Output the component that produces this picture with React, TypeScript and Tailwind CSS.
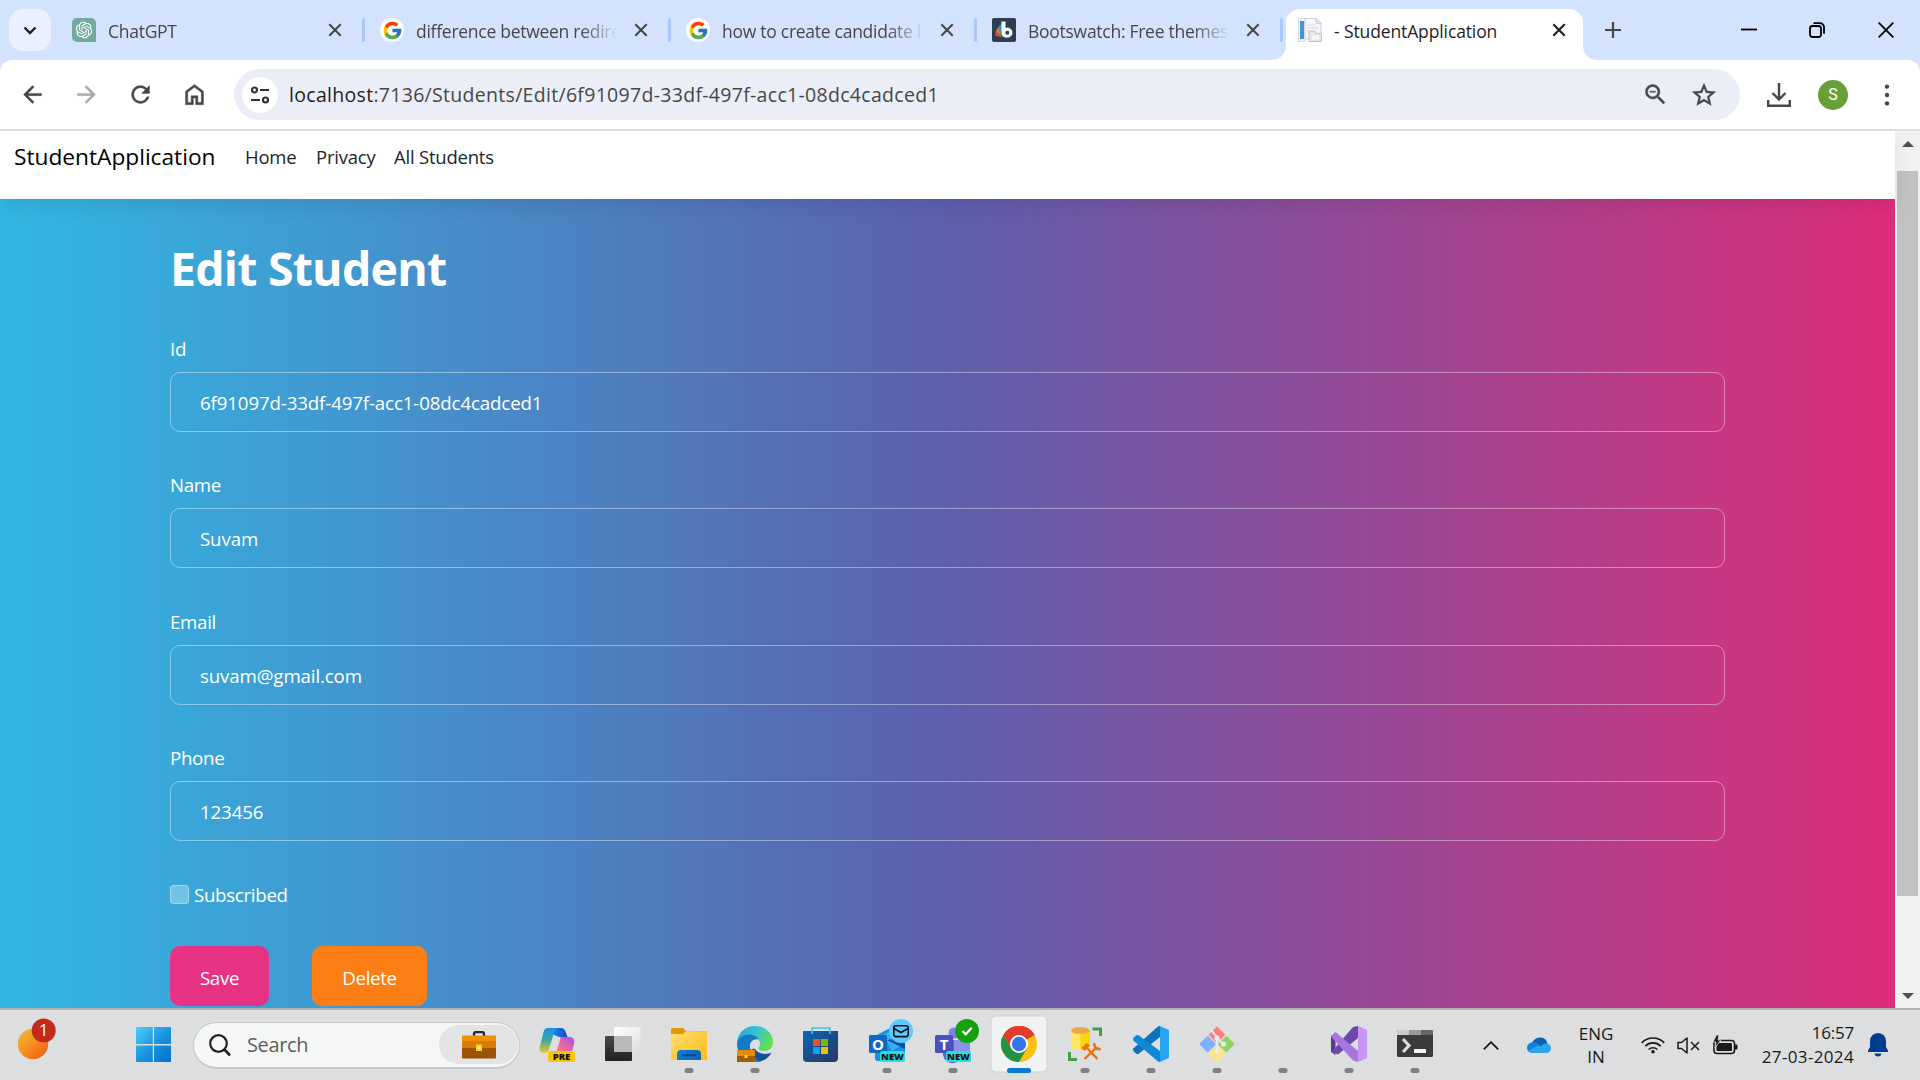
import type { ReactNode } from 'react';
import { FcGoogle } from 'react-icons/fc';
import { RiOpenaiFill } from 'react-icons/ri';

function CloseX({ color = '#474747' }: { color?: string }) {
  return (
    <svg viewBox="0 0 14 14" className="h-3.5 w-3.5 shrink-0" fill="none" stroke={color} strokeWidth="2.1">
      <path d="M1.3 1.3 12.7 12.7M12.7 1.3 1.3 12.7" />
    </svg>
  );
}

function GoogleIcon() {
  return (
    <span className="flex h-6 w-6 items-center justify-center rounded-full bg-white">
      <FcGoogle size={21} />
    </span>
  );
}

function GptIcon() {
  return (
    <span className="flex h-6 w-6 items-center justify-center rounded-[5px] rounded-br-none bg-[#74aa9c]">
      <RiOpenaiFill size={20} color="#fff" />
    </span>
  );
}

function BootswatchIcon() {
  return (
    <svg viewBox="0 0 24 24" className="h-6 w-6">
      <rect width="24" height="24" rx="2" fill="#2c3e50" />
      <path d="M12 4 8.5 6.5 10.5 19Z" fill="#1abc9c" />
      <path d="M8.5 6.5 6 9.5 9.8 19Z" fill="#3498db" />
      <path d="M6 9.5 3.8 13 9.8 19Z" fill="#e67e22" />
      <path d="M3.8 13 3 17.5 9.8 19.5Z" fill="#e74c3c" />
      <path d="M9.500 3.500h4V10a5 5 0 1 1 2 9.600c-4 .4-6-1.600-6-5Z" fill="#fff" />
      <circle cx="15.300" cy="14.700" r="2" fill="#2c3e50" />
    </svg>
  );
}

function PageIcon() {
  return (
    <svg viewBox="0 0 24 24" className="h-6 w-6">
      <rect x=".5" y=".5" width="6.500" height="23" fill="#f2f5f8" stroke="#c6d3de" strokeWidth=".7" />
      <rect x="2" y="3" width="4" height="18" fill="#3f96d2" />
      <path d="M7 .5h11.500l4.500 4.500v16H7Z" fill="#f6f7f9" stroke="#c3c8ce" strokeWidth=".8" />
      <path d="M18 .5v5h5" fill="#e2e6ea" stroke="#c3c8ce" strokeWidth=".7" />
      <path d="M9 7h8M9 10h12M9 13h3" stroke="#d5dae0" strokeWidth="1" />
      <path d="M11 13h6l1 2.500h5.500v8H11Z" fill="#e4e7ec" stroke="#b9c0c9" strokeWidth=".9" />
      <rect x="14" y="17.500" width="7" height="4" fill="#f7f8fa" />
    </svg>
  );
}

function Tab({ icon, label, first = false }: { icon: ReactNode; label: string; first?: boolean }) {
  return (
    <div className="flex h-[42px] shrink-0 items-center pl-2.5">
      {icon}
      <div
        className={
          'ml-3 overflow-hidden pt-0.5 text-[17.5px] tracking-[-0.27px] whitespace-nowrap text-[#474747] [mask-image:linear-gradient(to_right,black_165px,transparent_202px)] ' +
          (first ? 'w-[202px]' : 'w-[200px]')
        }
      >
        {label}
      </div>
      <div className="ml-[18px] flex w-[34px] items-center">
        <CloseX />
      </div>
      <div className="mr-[5px] h-6 w-[3px] rounded-full bg-[#a8c7fa]" />
    </div>
  );
}

function TabStrip() {
  return (
    <div className="flex h-[60px] shrink-0 items-start bg-[#d3e3fd] pt-[9px]">
      <div className="mr-[11px] ml-[9px] flex h-[42px] w-[42px] items-center justify-center rounded-[14px] bg-[#e9f1ff]">
        <svg viewBox="0 0 14 9" className="h-[9px] w-3.5" fill="none" stroke="#1f1f1f" strokeWidth="2.400">
          <path d="M1.500 1.500 7 7 12.500 1.500" />
        </svg>
      </div>
      <Tab first icon={<GptIcon />} label="ChatGPT" />
      <Tab icon={<GoogleIcon />} label="difference between redire" />
      <Tab icon={<GoogleIcon />} label="how to create candidate l" />
      <Tab icon={<BootswatchIcon />} label="Bootswatch: Free themes" />
      <div className="relative -ml-0.5 flex h-[51px] w-[297px] shrink-0 items-start rounded-t-[14px] bg-white pl-3">
        <svg viewBox="0 0 14 14" className="absolute bottom-0 -left-3.5 h-3.5 w-3.5">
          <path d="M14 0v14H0A14 14 0 0 0 14 0Z" fill="#fff" />
        </svg>
        <svg viewBox="0 0 14 14" className="absolute -right-3.5 bottom-0 h-3.5 w-3.5">
          <path d="M0 0v14H14A14 14 0 0 1 0 0Z" fill="#fff" />
        </svg>
        <div className="flex h-[42px] items-center">
          <PageIcon />
          <div className="ml-3 w-[218px] pt-0.5 text-[17.5px] tracking-[-0.12px] whitespace-nowrap text-[#1f1f1f]">
            - StudentApplication
          </div>
          <CloseX color="#1f1f1f" />
        </div>
      </div>
      <div className="ml-[21px] flex h-[42px] grow items-center">
        <svg viewBox="0 0 18 18" className="h-[18px] w-[18px]" stroke="#474747" strokeWidth="2.200">
          <path d="M9 1v16M1 9h16" />
        </svg>
        <svg viewBox="0 0 16 16" className="ml-[119px] h-4 w-4" stroke="#000" strokeWidth="1.800">
          <path d="M0 7.500h16" />
        </svg>
        <svg viewBox="0 0 16 16" className="ml-[52px] h-4 w-4" fill="none" stroke="#000" strokeWidth="1.800">
          <rect x="1" y="4" width="11" height="11" rx="2.500" />
          <path d="M4.500 1.200H11a4 4 0 0 1 4 4v6.500" />
        </svg>
        <svg viewBox="0 0 16 16" className="ml-[53px] h-4 w-4" fill="none" stroke="#000" strokeWidth="1.800">
          <path d="M.7.7 15.300 15.300M15.300.7.7 15.300" />
        </svg>
      </div>
    </div>
  );
}

function ToolIcon({ d, color = '#474747', size = 27 }: { d: string; color?: string; size?: number }) {
  return (
    <svg
      viewBox="0 0 24 24"
      width={size}
      height={size}
      fill={color}
      stroke={color}
      strokeWidth=".35"
      className="shrink-0"
    >
      <path d={d} />
    </svg>
  );
}

function Toolbar() {
  return (
    <div className="h-[71px] shrink-0 bg-[#d3e3fd]">
      <div className="flex h-full items-center rounded-t-[12px] border-b-2 border-[#dedede] bg-white">
        <div className="ml-[19px] flex w-[215px] gap-[27px]">
          <ToolIcon d="M20 11H7.830l5.590-5.590L12 4l-8 8 8 8 1.410-1.410L7.830 13H20v-2z" />
          <ToolIcon color="#a9a9a9" d="M12 4l-1.410 1.410L16.170 11H4v2h12.170l-5.580 5.590L12 20l8-8z" />
          <ToolIcon d="M17.650 6.350A7.958 7.958 0 0 0 12 4a8 8 0 1 0 7.730 10h-2.080A6 6 0 1 1 12 6c1.660 0 3.140.69 4.220 1.780L13 11h7V4l-2.350 2.350z" />
          <ToolIcon d="M6 19h3v-6h6v6h3v-9l-6-4.500L6 10v9zm-2 2V9l8-6 8 6v12h-7v-6h-2v6H4z" />
        </div>
        <div className="flex h-[51px] w-[1506px] items-center rounded-full bg-[#ebeef7] pl-2">
          <div className="flex h-9 w-9 items-center justify-center rounded-full bg-white">
            <svg viewBox="0 0 20 18" className="h-[18px] w-5" fill="none" stroke="#333" strokeWidth="2.200">
              <circle cx="4.500" cy="4" r="2.500" />
              <path d="M10 4h9M1 14h9" />
              <circle cx="15.500" cy="14" r="2.500" />
            </svg>
          </div>
          <div className="ml-[11px] grow text-[19.500px] tracking-[0.300px] whitespace-nowrap text-[#474747]">
            <span className="text-[#1f1f1f]">localhost</span>:7136/Students/Edit/6f91097d-33df-497f-acc1-08dc4cadced1
          </div>
          <div className="mr-[22px] flex items-center gap-[21px]">
            <ToolIcon d="M15.500 14h-.79l-.28-.27A6.471 6.471 0 0 0 16 9.500 6.500 6.500 0 1 0 9.500 16c1.610 0 3.090-.59 4.230-1.570l.27.28v.79l5 4.990L20.490 19l-4.990-5zm-6 0C7.010 14 5 11.990 5 9.500S7.010 5 9.500 5 14 7.010 14 9.500 11.990 14 9.500 14zM7 9h5v1H7z" />
            <ToolIcon
              size={28}
              d="M22 9.240l-7.190-.62L12 2 9.190 8.630 2 9.240l5.460 4.730L5.820 21 12 17.270 18.180 21l-1.630-7.030L22 9.240zM12 15.400l-3.760 2.270 1-4.280-3.320-2.880 4.380-.38L12 6.100l1.710 4.040 4.380.38-3.320 2.880 1 4.280L12 15.400z"
            />
          </div>
        </div>
        <svg viewBox="0 0 24 24" className="ml-[27px] h-6 w-6" fill="none" stroke="#474747" strokeWidth="2.400">
          <path d="M12 0v16M5.500 10 12 16.500 18.500 10M1.200 17v5.800h21.600V17" />
        </svg>
        <div className="ml-[27px] flex h-[30px] w-[30px] items-center justify-center rounded-full bg-[#689f38] font-['Roboto'] text-base text-white">
          S
        </div>
        <svg viewBox="0 0 6 22" className="ml-9 h-[22px] w-1.5" fill="#474747">
          <circle cx="3" cy="2.600" r="2.200" />
          <circle cx="3" cy="11" r="2.200" />
          <circle cx="3" cy="19.400" r="2.200" />
        </svg>
      </div>
    </div>
  );
}

function Field({ label, value }: { label: string; value: string }) {
  return (
    <div className="mb-[28.400px]">
      <div className="h-[48px] pt-[13px] leading-[24px] tracking-[-0.300px]">{label}</div>
      <div className="flex h-[60px] items-center rounded-[10px] border border-white/40 pt-0.5 pl-[29px]">{value}</div>
    </div>
  );
}

function Page() {
  return (
    <div className="flex h-[877px] shrink-0 overflow-hidden">
      <div className="flex w-[1895px] flex-col">
        <div className="relative flex h-[68px] shrink-0 bg-white pl-3.5 text-[18.500px] leading-[52px] tracking-[-0.220px] text-[#212529] shadow-[0_8px_16px_rgba(0,0,0,0.080)]">
          <span className="w-[231px] text-[22.700px] tracking-normal text-black">StudentApplication</span>
          <span className="w-[71px]">Home</span>
          <span className="w-[78px]">Privacy</span>
          <span>All Students</span>
        </div>
        <div className="grow bg-[linear-gradient(90deg,#31b8e3,#5d5fae_50%,#de2d79)] px-[170px] text-[18.700px] tracking-[-0.130px] text-white">
          <h1 className="h-[125px] pt-10 text-[46.500px] leading-[58px] font-bold tracking-[-0.800px]">Edit Student</h1>
          <Field label="Id" value="6f91097d-33df-497f-acc1-08dc4cadced1" />
          <Field label="Name" value="Suvam" />
          <Field label="Email" value="suvam@gmail.com" />
          <Field label="Phone" value="123456" />
          <div className="mt-[43px] flex h-[20px] items-center">
            <div className="h-[19px] w-[19px] rounded-[4px] border border-white/30 bg-white/30" />
            <span className="ml-[5px] pt-0.5 tracking-[-0.300px]">Subscribed</span>
          </div>
          <div className="mt-[42px] flex gap-[43px] tracking-[-0.350px]">
            <div className="flex h-[60px] w-[99px] items-center justify-center rounded-[10px] bg-[#e83283] pt-1">Save</div>
            <div className="flex h-[60px] w-[115px] items-center justify-center rounded-[10px] bg-[#fd7e14] pt-1">
              Delete
            </div>
          </div>
        </div>
      </div>
      <div className="flex w-[25px] flex-col items-center bg-[#f1f1f1]">
        <svg viewBox="0 0 12 6" className="mt-2.5 h-1.5 w-3" fill="#505050">
          <path d="M6 0 12 6H0Z" />
        </svg>
        <div className="mt-6 h-[725px] w-[21px] bg-[#c1c1c1]" />
        <svg viewBox="0 0 12 6" className="mt-auto mb-[9px] h-1.5 w-3" fill="#505050">
          <path d="M0 0H12L6 6Z" />
        </svg>
      </div>
    </div>
  );
}

function Slot({ children, open = false }: { children?: ReactNode; open?: boolean }) {
  return (
    <svg viewBox="0 0 66 70" className="h-[70px] w-[66px] shrink-0">
      {children}
      {open && <rect x="28.500" y="58" width="9" height="5" rx="2.500" fill="#7d7f80" />}
    </svg>
  );
}

function Label({ text, fill, x }: { text: string; fill: string; x: number }) {
  return (
    <>
      <rect x={x} y="41" width={51 - x} height="11" rx="2.500" fill={fill} />
      <text
        x={(x + 51) / 2}
        y="50"
        textAnchor="middle"
        fontSize="9.500"
        fontWeight="800"
        fontFamily="Open Sans"
        fill="#111"
      >
        {text}
      </text>
    </>
  );
}

function Copilot() {
  return (
    <Slot>
      <defs>
        <linearGradient id="cpA" x1="0" y1="0" x2="0" y2="1">
          <stop offset="0" stopColor="#1c8fe8" />
          <stop offset=".5" stopColor="#3fa9a0" />
          <stop offset="1" stopColor="#f2c81b" />
        </linearGradient>
        <linearGradient id="cpB" x1="1" y1="0" x2="0" y2="1">
          <stop offset="0" stopColor="#a04df0" />
          <stop offset=".5" stopColor="#ee6a9c" />
          <stop offset="1" stopColor="#f99a5b" />
        </linearGradient>
        <linearGradient id="cpC" x1="0" y1="0" x2="1" y2="0">
          <stop offset="0" stopColor="#1a9bea" />
          <stop offset="1" stopColor="#1846c9" />
        </linearGradient>
      </defs>
      <path d="M25 18h12c3 0 4 2 5 5l1.500 4H35L28 24Z" fill="url(#cpC)" />
      <path d="M36 27h9.500c4 0 5.500 3 4.500 7l-2 7c-1 3-3 5-6 5H28c3 0 4-3 5-6l3-10c.5-2 .5-3 0-3Z" fill="url(#cpB)" />
      <path d="M24 18h11c-3 0-4 2-5 5l-5 16c-1 3-2 4-5 4-4 0-5-3-4-7l3-12c1-4 2-6 5-6Z" fill="url(#cpA)" />
      <Label text="PRE" fill="#fcc503" x={24} />
    </Slot>
  );
}

function TaskView() {
  return (
    <Slot>
      <defs>
        <linearGradient id="tvA" x1="0" y1="0" x2="0" y2="1">
          <stop offset="0" stopColor="#484848" />
          <stop offset="1" stopColor="#222" />
        </linearGradient>
        <linearGradient id="tvB" x1="0" y1="0" x2="1" y2="1">
          <stop offset="0" stopColor="#fff" />
          <stop offset="1" stopColor="#dedede" />
        </linearGradient>
      </defs>
      <rect x="15" y="26" width="27" height="25" rx="1" fill="url(#tvA)" />
      <rect x="24" y="17" width="26.500" height="25" rx="1" fill="url(#tvB)" />
      <rect x="24" y="26" width="18" height="16" fill="#b9b9b9" />
    </Slot>
  );
}

function Folder() {
  return (
    <Slot open>
      <defs>
        <linearGradient id="foA" x1="0" y1="0" x2="1" y2="1">
          <stop offset="0" stopColor="#ffdc77" />
          <stop offset="1" stopColor="#fdbc12" />
        </linearGradient>
        <linearGradient id="foB" x1="0" y1="0" x2="1" y2="0">
          <stop offset="0" stopColor="#0f7cd6" />
          <stop offset="1" stopColor="#1464b4" />
        </linearGradient>
      </defs>
      <path d="M15 19.500Q15 18 16.500 18H27l3 3h20q1 0 1 1v8H15Z" fill="#dd9a06" />
      <path d="M15 24h12l3-2.800h20q1 0 1 1V50H15Z" fill="url(#foA)" />
      <path d="M21 50v-6q0-4 4-4h16q4 0 4 4v6Z" fill="url(#foB)" />
      <rect x="25.500" y="44.300" width="15" height="2" rx="1" fill="#0b4a8c" />
    </Slot>
  );
}

function Edge() {
  return (
    <Slot open>
      <defs>
        <linearGradient id="edA" x1="0" y1="0" x2="1" y2=".5">
          <stop offset="0" stopColor="#1e9fe0" />
          <stop offset=".5" stopColor="#35c3d3" />
          <stop offset="1" stopColor="#62df56" />
        </linearGradient>
        <linearGradient id="edB" x1="0" y1="0" x2="0" y2="1">
          <stop offset="0" stopColor="#1b74c4" />
          <stop offset="1" stopColor="#0b84dd" />
        </linearGradient>
      </defs>
      <path d="M34 52c7 0 13-4 15.500-9.500-6 3-14 1-17-4l-6 2c0 6 3 11 7.500 11.500Z" fill="#12519c" />
      <path d="M15 33C15.500 23 23 16 33 16c11 0 18 8 18 16 0 6-4 9-9 9-3 0-5.500-1-5.500-2.500 0-1 1.500-1.500 1.500-4.500 0-5-5-9-11-9-5 0-9 3-12 8Z" fill="url(#edA)" />
      <path d="M15 34c1-6 6-9.500 12-9.500 4 0 8 1.500 10 5-6-1.500-10 3-9 8 1 6 5 10 9 14.200C24 53.500 15 44 15 34Z" fill="url(#edB)" />
      <rect x="15" y="40" width="18" height="12" fill="#e88a05" />
      <rect x="15" y="46" width="18" height="6" fill="#a35a04" />
      <rect x="22.500" y="45" width="3" height="3" fill="#ffd83a" />
    </Slot>
  );
}

function Store() {
  return (
    <Slot>
      <defs>
        <linearGradient id="stA" x1="0" y1="0" x2="1" y2="1">
          <stop offset="0" stopColor="#0867b8" />
          <stop offset="1" stopColor="#27385e" />
        </linearGradient>
      </defs>
      <path d="M15 21h35v27q0 4-4 4H19q-4 0-4-4Z" fill="url(#stA)" />
      <path d="M24.200 24v-6h17.600v6" fill="none" stroke="#37c2f5" strokeWidth="1.700" />
      <rect x="25" y="29" width="7" height="7" fill="#f25022" />
      <rect x="33" y="29" width="7" height="7" fill="#7fba00" />
      <rect x="25" y="37" width="7" height="7" fill="#00a4ef" />
      <rect x="33" y="37" width="7" height="7" fill="#ffb900" />
    </Slot>
  );
}

function BoxLetter({ letter, fill }: { letter: string; fill: string }) {
  return (
    <>
      <rect x="15" y="25" width="18" height="18" rx="1.500" fill={fill} />
      <text x="24" y="39.500" textAnchor="middle" fontSize="15" fontWeight="700" fontFamily="Open Sans" fill="#fff">
        {letter}
      </text>
    </>
  );
}

function Outlook() {
  return (
    <Slot open>
      <path d="M21 26 36 18l15 12v18q0 3-3 3H24q-3 0-3-3Z" fill="#1a8fe0" />
      <path d="M29 25 40 19l11 14-13 8Z" fill="#35b1ee" />
      <path d="M33 30 51 39v-6L40 29Z" fill="#0b4fa8" />
      <BoxLetter letter="O" fill="#1068c4" />
      <circle cx="47" cy="21" r="12" fill="#5bc8ff" />
      <rect x="39.800" y="15.800" width="14.400" height="10.800" rx="2" fill="none" stroke="#111" strokeWidth="1.600" />
      <path d="m40 18.500 7 4 7-4" fill="none" stroke="#111" strokeWidth="1.600" />
      <Label text="NEW" fill="#22e0e0" x={26} />
    </Slot>
  );
}

function Teams() {
  return (
    <Slot open>
      <circle cx="34" cy="23" r="5.500" fill="#7b83eb" />
      <path d="M23 30h19v12a9 9 0 0 1-19 3Z" fill="#5b62c9" />
      <path d="M34 30h16v13q-1 6-8 6H34Z" fill="#8b91ee" />
      <BoxLetter letter="T" fill="#4b50bf" />
      <circle cx="47" cy="21" r="12" fill="#13a10e" />
      <path d="m42.500 21 3.200 3.300 6-6.500" fill="none" stroke="#fff" strokeWidth="2.200" />
      <Label text="NEW" fill="#22e0e0" x={26} />
    </Slot>
  );
}

function Chrome() {
  return (
    <Slot>
      <rect x="5" y="6" width="56" height="56" rx="5" fill="#f1f2f3" stroke="#cdcfd1" strokeWidth="1" />
      <circle cx="33" cy="34" r="18" fill="#fbc116" />
      <path d="M33 34 17.400 25A18 18 0 0 1 48.600 25Z" fill="#e33b2e" />
      <path d="M33 25h15.600A18 18 0 0 0 17.400 25l7.800 13.500Z" fill="#e33b2e" />
      <path d="M17.400 25A18 18 0 0 0 33 52l7.800-13.500L25.200 38.500Z" fill="#229342" />
      <circle cx="33" cy="34" r="9" fill="#fff" />
      <circle cx="33" cy="34" r="7.200" fill="#2f77ea" />
      <rect x="21" y="58" width="24" height="5" rx="2.500" fill="#0a78d4" />
    </Slot>
  );
}

function DbTools() {
  return (
    <Slot open>
      <path d="M19 20v17c0 4 19 4 19 0V20Z" fill="#fbd505" />
      <path d="M19 20v17c0 2 5 3 9.500 3V20Z" fill="#ffe566" />
      <ellipse cx="28.500" cy="20.500" rx="9.500" ry="3.500" fill="#efa54c" />
      <path d="M40.500 19H48.500V26" fill="none" stroke="#3fa045" strokeWidth="3" />
      <path d="M17.500 42v7.500H25" fill="none" stroke="#3fa045" strokeWidth="3" />
      <path d="M34 37 45.500 49M44 38 32.500 49" stroke="#dcdee0" strokeWidth="5" />
      <path d="M34 37 45.500 49M44 38 32.500 49" stroke="#f0700c" strokeWidth="2.400" />
      <path d="m29.500 38 5-5 3.500 2.500-5.500 5.500Z" fill="#f0700c" />
      <path d="M42.500 33q-1 6 6 6.500" fill="none" stroke="#f0700c" strokeWidth="2.600" transform="rotate(-4 45 36)" />
    </Slot>
  );
}

function VsCode() {
  return (
    <Slot open>
      <path d="M42 16v11L21 43.500q-1.500 1-3 0l-2.400-2.200q-1.200-1.500 0-3L40 16.500Z" fill="#0f72b8" />
      <path d="M42 52V41L21 25.500q-1.500-1-3 0l-2.400 2.200q-1.200 1.500 0 3L40 51.500Z" fill="#0d8ad6" />
      <path d="M42 16 51 20v28l-9 4Z" fill="#27a5f2" />
    </Slot>
  );
}

function GitIcon() {
  return (
    <Slot open>
      <g transform="translate(33 34) rotate(45)">
        <rect x="-12.500" y="-12.500" width="12" height="12" rx="1.500" fill="#ff7f7f" transform="translate(0 0)" />
        <rect x=".7" y="-12.500" width="12" height="12" rx="1.500" fill="#8dd460" />
        <rect x="-12.500" y=".7" width="12" height="12" rx="1.500" fill="#7fb0ff" />
        <rect x=".7" y=".7" width="12" height="12" rx="1.500" fill="#ffe480" />
      </g>
      <path d="m27 20 6 7v14M33 28l6 6" fill="none" stroke="#e9eaeb" strokeWidth="2" />
      <circle cx="33" cy="28" r="2.600" fill="#e9eaeb" />
      <circle cx="39.500" cy="34" r="2.600" fill="#e9eaeb" />
      <circle cx="33" cy="41" r="2.600" fill="#e9eaeb" />
    </Slot>
  );
}

function VisualStudio() {
  return (
    <Slot open>
      <path d="M15 26l4.500-3v22L15 42Z" fill="#5a3a94" />
      <path d="M42 16v12L22 44.500 15.500 42 37 17Z" fill="#6c48a8" />
      <path d="M19.500 22 42 41v11l-5-1.500L15 26.500Z" fill="#a578e0" />
      <path d="M42 16 51 20v28l-9 4Z" fill="#c795f7" />
    </Slot>
  );
}

function Terminal() {
  return (
    <Slot open>
      <rect x="15" y="20" width="36" height="27" rx="1.500" fill="#3b3b3b" />
      <path d="M15 25v-3.500q0-1.500 1.500-1.500H27v5Z" fill="#ccc" />
      <rect x="27" y="20" width="12" height="5" fill="#999" />
      <path d="M39 20h10.500q1.500 0 1.500 1.500V25H39Z" fill="#666" />
      <path d="m21 29 6 6.500-6 6.500" fill="none" stroke="#dcdcdc" strokeWidth="3.200" />
      <rect x="32" y="39" width="12" height="4" rx=".5" fill="#f0f0f0" />
    </Slot>
  );
}

function Taskbar() {
  return (
    <div className="flex h-[72px] shrink-0 items-center overflow-hidden border-t-2 border-[#b1b2b3] bg-[#dcdee0]">
      <svg viewBox="0 0 136 70" className="h-[70px] w-[136px] shrink-0">
        <defs>
          <linearGradient id="sun" x1="0" y1="0" x2="1" y2="1">
            <stop offset="0" stopColor="#efc336" />
            <stop offset=".5" stopColor="#f68c1f" />
            <stop offset="1" stopColor="#ec5a0c" />
          </linearGradient>
        </defs>
        <circle cx="33" cy="34" r="15.200" fill="url(#sun)" />
        <circle cx="43.700" cy="20.500" r="12" fill="#c42b1c" />
        <text x="43.700" y="26.300" textAnchor="middle" fontSize="16.500" fontFamily="Open Sans" fill="#fff">
          1
        </text>
      </svg>
      <svg viewBox="0 0 57 70" className="h-[70px] w-[57px] shrink-0">
        <defs>
          <linearGradient id="win" x1="0" y1="17" x2="35" y2="52" gradientUnits="userSpaceOnUse">
            <stop offset="0" stopColor="#4fd0fb" />
            <stop offset=".5" stopColor="#1b95e0" />
            <stop offset="1" stopColor="#0070d0" />
          </linearGradient>
        </defs>
        <path
          d="M1 17h15.800v17H0V18q0-1 1-1ZM18 17h16q1 0 1 1v16H18ZM0 35.500h16.800V52H1q-1 0-1-1ZM18 35.500h17V51q0 1-1 1H18Z"
          fill="url(#win)"
        />
      </svg>
      <div className="flex h-[47px] w-[327px] shrink-0 items-center rounded-full border border-b-2 border-[#c6c8c9] bg-[#f5f6f6] pl-[15px]">
        <svg viewBox="0 0 22 22" className="h-[22px] w-[22px]" fill="none" stroke="#222" strokeWidth="2.200">
          <circle cx="9.500" cy="9.500" r="8.300" />
          <path d="m15.500 15.500 5.500 6" strokeWidth="2.600" />
        </svg>
        <span className="ml-4 grow text-[20px] tracking-[-0.350px] text-[#5d5d5d]">Search</span>
        <div className="mr-px flex h-[39px] w-[79px] items-center justify-center rounded-full bg-[#e3e4e4]">
          <svg viewBox="0 0 34 28" className="h-7 w-[34px]">
            <path d="M12 5V3q0-2 2-2h6q2 0 2 2v2" fill="none" stroke="#2a2a2a" strokeWidth="2.400" />
            <rect y="4.500" width="34" height="13" rx="1" fill="#f09206" />
            <path d="M0 10h34v7H0Z" fill="#d97b05" />
            <path d="M0 17h34v9.500q0 1-1 1H1q-1 0-1-1Z" fill="#9a5403" />
            <rect x="14" y="13.500" width="6" height="6.500" fill="#ffd21c" />
            <rect x="16" y="15.500" width="2.500" height="2.500" fill="#fff2a0" />
          </svg>
        </div>
      </div>
      <div className="ml-1 flex shrink-0">
        <Copilot />
        <TaskView />
        <Folder />
        <Edge />
        <Store />
        <Outlook />
        <Teams />
        <Chrome />
        <DbTools />
        <VsCode />
        <GitIcon />
        <Slot open />
        <VisualStudio />
        <Terminal />
      </div>
      <svg viewBox="0 0 16 9" className="ml-[35px] h-[9px] w-4 shrink-0" fill="none" stroke="#1a1a1a" strokeWidth="1.800">
        <path d="M.8 8.300 8 1.200l7.200 7.100" />
      </svg>
      <svg viewBox="0 0 24 16" className="ml-7 h-4 w-6 shrink-0">
        <path d="M5 6Q8 0 14 .5q5 .5 6.500 6L12 11Z" fill="#0b61b8" />
        <path d="M4.500 5.500q4-1 7 1.500L20 13l-15 2.500Q0 15 0 10.500 .3 6.500 4.500 5.500Z" fill="#1180d8" />
        <path d="m11 8.500 2.500 1.200Q16 6 20 6.500q4 1 4 5-.5 4-4 4.500H5q-2.500 0-4-2Z" fill="#2aa4ee" />
      </svg>
      <div className="ml-5 flex w-[50px] shrink-0 flex-col items-center text-[17px] leading-[23px] text-[#1a1a1a]">
        <span>ENG</span>
        <span>IN</span>
      </div>
      <svg viewBox="0 0 24 18" className="ml-5 h-[18px] w-6 shrink-0" fill="none" stroke="#1a1a1a" strokeWidth="1.700">
        <path d="M.8 6.800a15.500 15.500 0 0 1 22.400 0M4.300 10.200a10.800 10.800 0 0 1 15.400 0M7.700 13.500a6.200 6.200 0 0 1 8.600 0" />
        <circle cx="12" cy="15.800" r="1.800" fill="#1a1a1a" stroke="none" />
      </svg>
      <svg viewBox="0 0 23 17" className="ml-3 h-[17px] w-[23px] shrink-0" fill="none" stroke="#1a1a1a" strokeWidth="1.500">
        <path d="M1 5.500h3.500L10 1v15l-5.500-4.500H1Z" strokeLinejoin="round" />
        <path d="m14 5 8 8M22 5l-8 8" />
      </svg>
      <svg viewBox="0 0 25 20" className="ml-[13px] h-5 w-[25px] shrink-0">
        <rect x="1" y="5.500" width="20.500" height="13" rx="3" fill="none" stroke="#1a1a1a" strokeWidth="1.600" />
        <rect x="3.500" y="8" width="15.500" height="8" rx="1" fill="#1a1a1a" />
        <path d="M22 9.500h1.500q1 0 1 1v3q0 1-1 1H22Z" fill="#1a1a1a" />
        <path d="M3.500 0 0 7h3L2 12.500 8 5H5L6 0Z" fill="#1a1a1a" stroke="#dcdee0" strokeWidth=".8" />
      </svg>
      <div className="flex w-[116px] shrink-0 flex-col items-end text-[17px] leading-6 text-[#1a1a1a]">
        <span className="tracking-[-0.200px]">16:57</span>
        <span className="tracking-[0.350px]">27-03-2024</span>
      </div>
      <svg viewBox="0 0 20 24" className="ml-3.5 h-6 w-5 shrink-0" fill="#003e92">
        <path d="M10 0q7.500.5 8 8v6l2 3.500v1.500H0v-1.500L2 14V8Q2.500.5 10 0ZM6.500 20.500h7Q13 23.500 10 23.500T6.500 20.500Z" />
      </svg>
    </div>
  );
}

export default function App() {
  return (
    <div className="flex h-[1080px] w-[1920px] flex-col overflow-hidden bg-[#dcdee0] font-['Open_Sans',sans-serif]">
      <TabStrip />
      <Toolbar />
      <Page />
      <Taskbar />
    </div>
  );
}
